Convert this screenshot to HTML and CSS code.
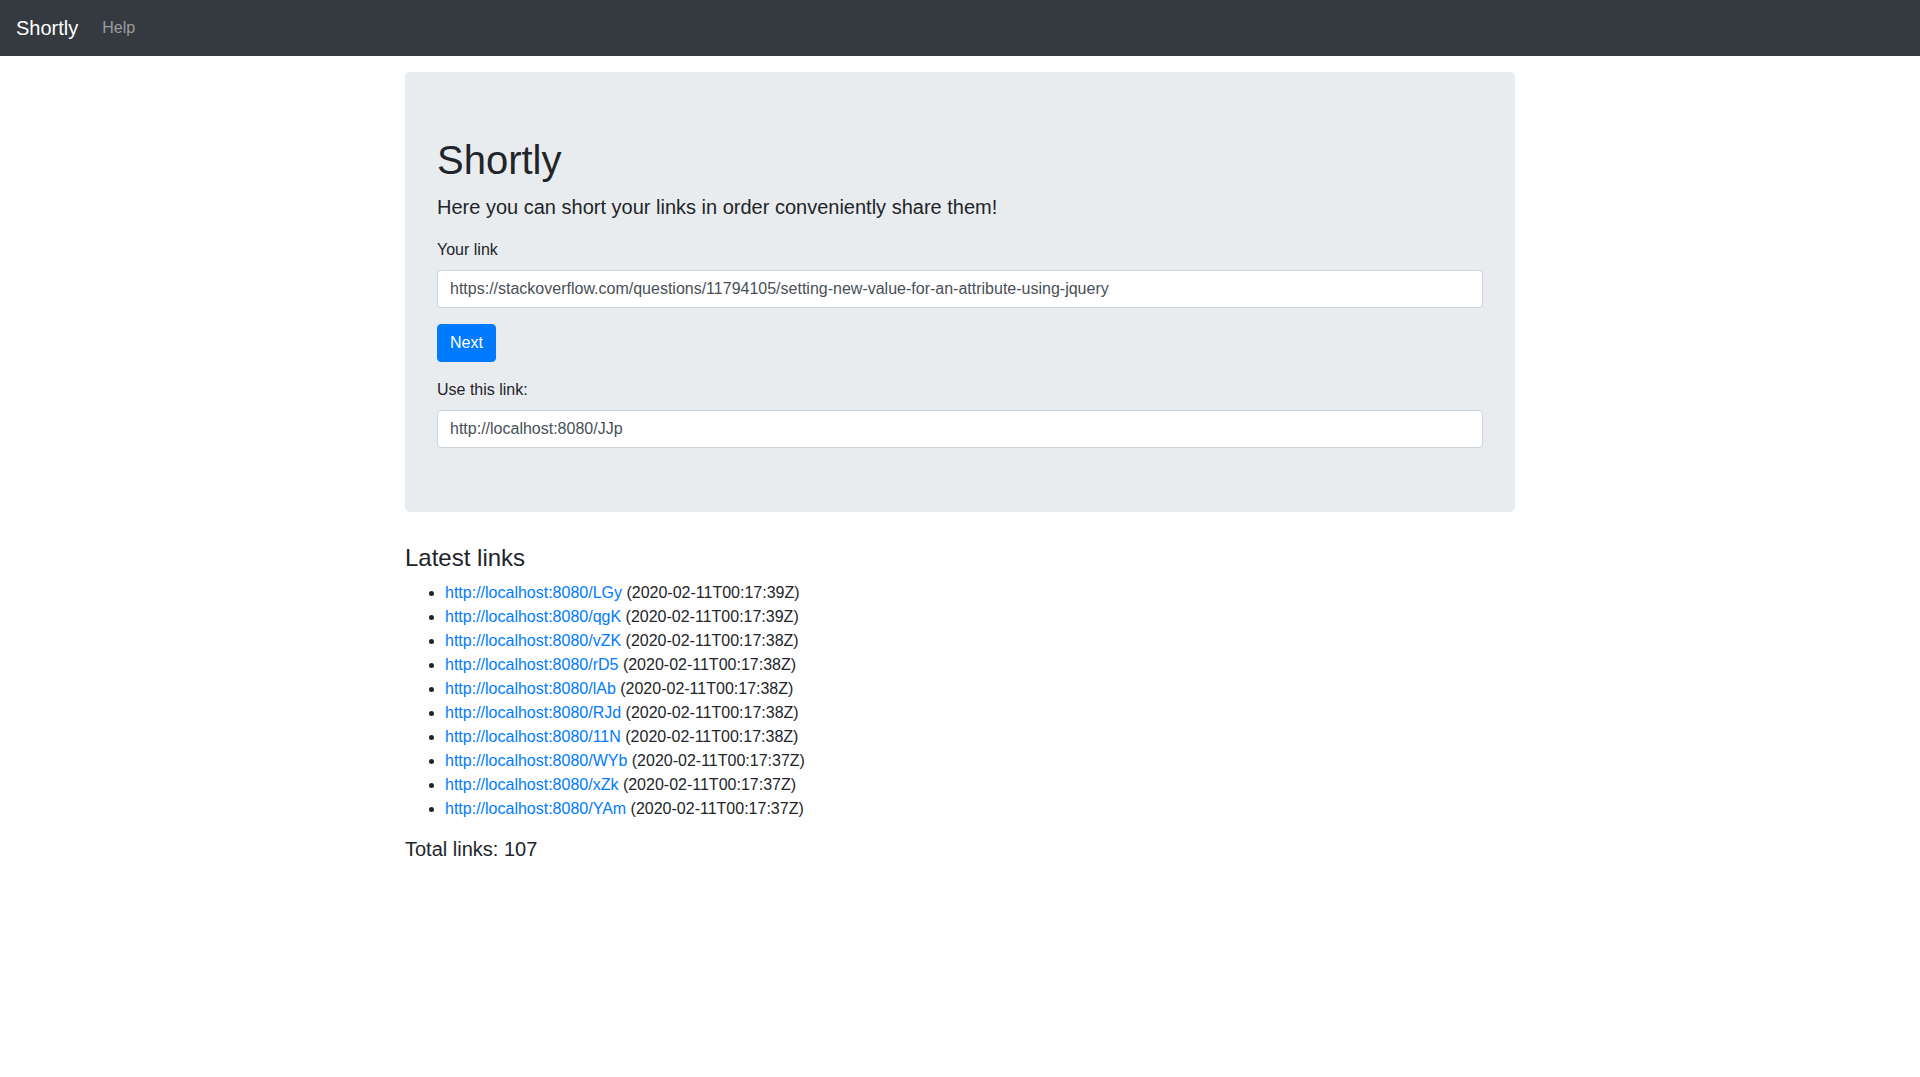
FILE: index.html
```html
<!DOCTYPE html>
<html lang="en">
<head>
<meta charset="utf-8">
<title>Shortly</title>
<link rel="stylesheet" href="styles.css">
</head>
<body>
<nav class="navbar">
  <a class="brand" href="#">Shortly</a>
  <a class="nav-link" href="#">Help</a>
</nav>
<main class="container">
  <section class="jumbotron">
    <h1 class="title">Shortly</h1>
    <p class="lead">Here you can short your links in order conveniently share them!</p>
    <div class="form-group">
      <label class="label">Your link</label>
      <input class="form-control" type="text" value="https://stackoverflow.com/questions/11794105/setting-new-value-for-an-attribute-using-jquery">
    </div>
    <button class="btn" type="button">Next</button>
    <div class="form-group last">
      <label class="label">Use this link:</label>
      <input class="form-control" type="text" value="http://localhost:8080/JJp">
    </div>
  </section>
  <h4 class="section-title">Latest links</h4>
  <ul class="links">
    <li><a href="#">http://localhost:8080/LGy</a> (2020-02-11T00:17:39Z)</li>
    <li><a href="#">http://localhost:8080/qgK</a> (2020-02-11T00:17:39Z)</li>
    <li><a href="#">http://localhost:8080/vZK</a> (2020-02-11T00:17:38Z)</li>
    <li><a href="#">http://localhost:8080/rD5</a> (2020-02-11T00:17:38Z)</li>
    <li><a href="#">http://localhost:8080/lAb</a> (2020-02-11T00:17:38Z)</li>
    <li><a href="#">http://localhost:8080/RJd</a> (2020-02-11T00:17:38Z)</li>
    <li><a href="#">http://localhost:8080/11N</a> (2020-02-11T00:17:38Z)</li>
    <li><a href="#">http://localhost:8080/WYb</a> (2020-02-11T00:17:37Z)</li>
    <li><a href="#">http://localhost:8080/xZk</a> (2020-02-11T00:17:37Z)</li>
    <li><a href="#">http://localhost:8080/YAm</a> (2020-02-11T00:17:37Z)</li>
  </ul>
  <h5 class="total">Total links: 107</h5>
</main>
</body>
</html>
```
FILE: styles.css
```css
* { box-sizing: border-box; }
html, body { margin: 0; padding: 0; }
body {
  font-family: "Liberation Sans", Arial, sans-serif;
  font-size: 16px;
  line-height: 1.5;
  color: #212529;
  background: #fff;
}
a { color: #007bff; text-decoration: none; }

.navbar {
  display: flex;
  align-items: center;
  background: #343a40;
  padding: 8px 16px;
  height: 56px;
}
.brand {
  color: #fff;
  font-size: 20px;
  line-height: 30px;
  padding: 5px 0;
  margin-right: 16px;
}
.nav-link {
  color: rgba(255,255,255,.5);
  padding: 8px;
}

.container {
  width: 1110px;
  margin: 16px auto 0;
}
.jumbotron {
  background: #e9ecef;
  border-radius: 4.8px;
  padding: 64px 32px;
  margin-bottom: 32px;
}
.title {
  font-size: 40px;
  font-weight: 500;
  line-height: 1.2;
  margin: 0 0 8px;
}
.lead {
  font-size: 20px;
  font-weight: 300;
  margin: 0 0 16px;
}
.form-group { margin-bottom: 16px; }
.form-group.last { margin-bottom: 0; margin-top: 16px; }
.label {
  display: inline-block;
  margin-bottom: 8px;
}
.form-control {
  display: block;
  width: 100%;
  height: 38px;
  padding: 6px 12px;
  font-family: inherit;
  font-size: 16px;
  line-height: 1.5;
  color: #495057;
  background: #fff;
  border: 1px solid #ced4da;
  border-radius: 4px;
}
.btn {
  display: inline-block;
  font-family: inherit;
  font-size: 16px;
  line-height: 1.5;
  padding: 6px 12px;
  color: #fff;
  background: #007bff;
  border: 1px solid #007bff;
  border-radius: 4px;
}
.section-title {
  font-size: 24px;
  font-weight: 500;
  line-height: 1.2;
  margin: 0 0 8px;
}
.links {
  margin: 0 0 16px;
  padding-left: 40px;
}
.total {
  font-size: 20px;
  font-weight: 500;
  line-height: 1.2;
  margin: 0 0 8px;
}
```
